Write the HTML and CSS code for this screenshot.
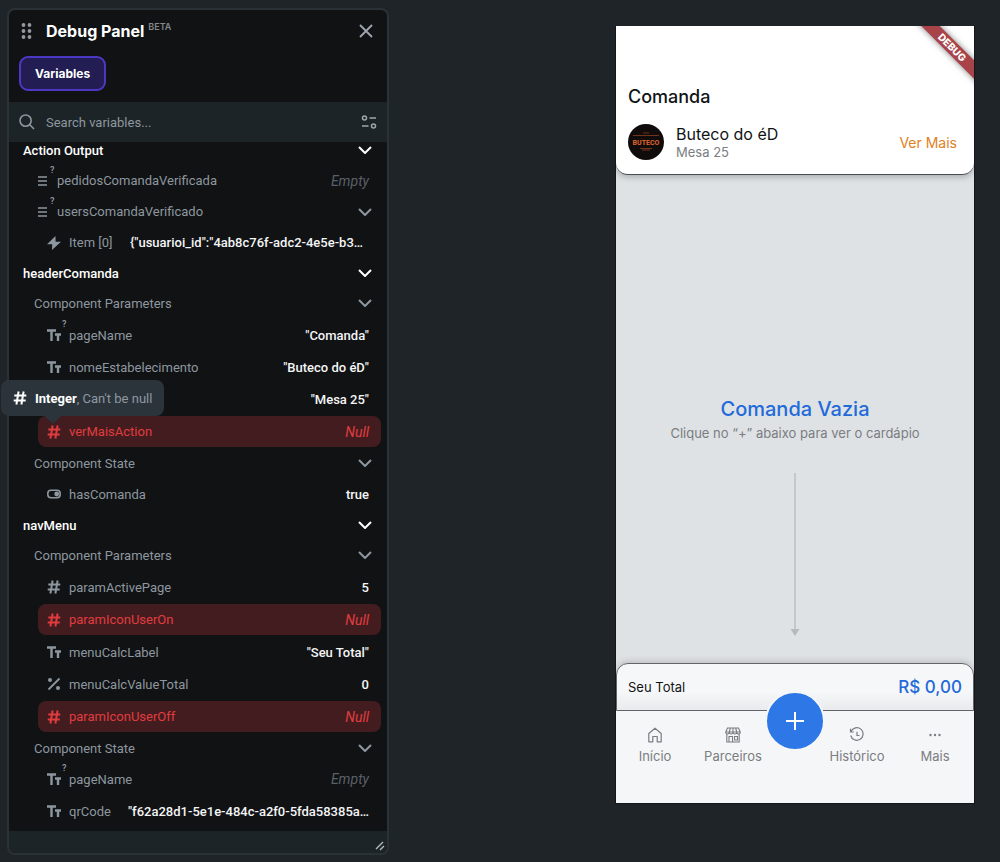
FILE: index.html
```
<!DOCTYPE html>
<html lang="pt-BR">

<head>
  <meta charset="UTF-8">
  <meta name="viewport" content="width=device-width, initial-scale=1.0">
  <title>Debug Panel | Comanda</title>
  <link rel="stylesheet" href="styles.css">
</head>

<body>
  <!-- shared icons -->
  <svg class="sprite" aria-hidden="true">
    <symbol id="chevron" viewBox="0 0 14 8">
      <path d="M1 1l6 6 6-6" fill="none" stroke="currentColor" stroke-width="2" />
    </symbol>
    <symbol id="text" viewBox="0 0 14 12">
      <path d="M0 1.5h9M4.5 1v11M8 5.5h6M11 5v7" fill="none" stroke="currentColor" stroke-width="2.4" />
    </symbol>
    <symbol id="hash" viewBox="0 0 14 14">
      <path d="M5.6 0.5L3.4 13.5M10.6 0.5L8.4 13.5M1.3 4.5h12M0.7 9.5h12" fill="none" stroke="currentColor" stroke-width="2" />
    </symbol>
    <symbol id="list" viewBox="0 0 10 10">
      <path d="M0 1h9M0 5h9M0 9h9" fill="none" stroke="currentColor" stroke-width="1.4" />
    </symbol>
    <symbol id="bolt" viewBox="0 0 14 14">
      <path d="M8.5 0L0 8.2h5.2L5 14l9-8.2H8.6z" fill="currentColor" />
    </symbol>
    <symbol id="toggle" viewBox="0 0 14 9">
      <rect x="0.8" y="0.8" width="12.4" height="7.4" rx="3.2" fill="none" stroke="currentColor" stroke-width="1.6" />
      <circle cx="9.7" cy="4.5" r="2.4" fill="currentColor" />
    </symbol>
    <symbol id="percent" viewBox="0 0 14 14">
      <path d="M1.5 12.5l11-11" stroke="currentColor" stroke-width="1.8" />
      <circle cx="3" cy="3" r="2" fill="currentColor" />
      <circle cx="11" cy="11" r="2" fill="currentColor" />
    </symbol>
  </svg>

  <aside class="panel">
    <header class="panel-header">
      <div class="panel-title">
        <svg class="grip" viewBox="0 0 12 16">
          <g fill="currentColor">
            <circle cx="2.5" cy="2" r="1.9" /><circle cx="8.5" cy="2" r="1.9" />
            <circle cx="2.5" cy="8" r="1.9" /><circle cx="8.5" cy="8" r="1.9" />
            <circle cx="2.5" cy="14" r="1.9" /><circle cx="8.5" cy="14" r="1.9" />
          </g>
        </svg>
        <h1>Debug Panel</h1>
        <span class="beta">BETA</span>
        <button class="icon-button close" type="button" aria-label="Close">
          <svg viewBox="0 0 14 14"><path d="M1 1l12 12M13 1L1 13" stroke="currentColor" stroke-width="1.9" /></svg>
        </button>
      </div>
      <button class="tab" type="button">Variables</button>
    </header>

    <div class="search">
      <label for="search" aria-label="Search variables">
        <svg viewBox="0 0 16 16"><g fill="none" stroke="currentColor" stroke-width="1.6"><circle cx="6.6" cy="6.6" r="5.6" /><path d="M10.8 10.8L15 15" /></g></svg>
      </label>
      <input id="search" type="text" placeholder="Search variables...">
      <button class="icon-button filter" type="button" aria-label="Filter">
        <svg viewBox="0 0 16 14"><g fill="none" stroke="currentColor" stroke-width="1.5"><circle cx="3.5" cy="3" r="2" /><path d="M8.5 3H15M1 11h6.5" /><circle cx="12.5" cy="11" r="2" /></g></svg>
      </button>
    </div>

    <div class="tree">
      <section class="group group-actions">
        <h2>Action Output <svg class="chevron"><use href="#chevron" /></svg></h2>
        <ul>
          <li class="var list-var"><svg><use href="#list" /></svg><sup>?</sup><span class="name">pedidosComandaVerificada</span><span class="value empty">Empty</span></li>
          <li class="var list-var expandable"><svg><use href="#list" /></svg><sup>?</sup><span class="name">usersComandaVerificado</span><svg class="chevron"><use href="#chevron" /></svg></li>
          <li class="var item-var"><svg><use href="#bolt" /></svg><span class="name">Item [0]</span><span class="value">{"usuarioi_id":"4ab8c76f-adc2-4e5e-b3…</span></li>
        </ul>
      </section>

      <section class="group">
        <h2>headerComanda <svg class="chevron"><use href="#chevron" /></svg></h2>
        <h3>Component Parameters <svg class="chevron"><use href="#chevron" /></svg></h3>
        <ul>
          <li class="var"><svg><use href="#text" /></svg><sup>?</sup><span class="name">pageName</span><span class="value">"Comanda"</span></li>
          <li class="var"><svg><use href="#text" /></svg><span class="name">nomeEstabelecimento</span><span class="value">"Buteco do éD"</span></li>
          <li class="var"><svg><use href="#text" /></svg><span class="name"></span><span class="value">"Mesa 25"</span></li>
          <li class="var is-null"><svg><use href="#hash" /></svg><span class="name">verMaisAction</span><span class="value">Null</span></li>
        </ul>
        <h3>Component State <svg class="chevron"><use href="#chevron" /></svg></h3>
        <ul>
          <li class="var"><svg><use href="#toggle" /></svg><span class="name">hasComanda</span><span class="value">true</span></li>
        </ul>
      </section>

      <section class="group">
        <h2>navMenu <svg class="chevron"><use href="#chevron" /></svg></h2>
        <h3>Component Parameters <svg class="chevron"><use href="#chevron" /></svg></h3>
        <ul>
          <li class="var"><svg><use href="#hash" /></svg><span class="name">paramActivePage</span><span class="value">5</span></li>
          <li class="var is-null"><svg><use href="#hash" /></svg><span class="name">paramIconUserOn</span><span class="value">Null</span></li>
          <li class="var"><svg><use href="#text" /></svg><span class="name">menuCalcLabel</span><span class="value">"Seu Total"</span></li>
          <li class="var"><svg><use href="#percent" /></svg><span class="name">menuCalcValueTotal</span><span class="value">0</span></li>
          <li class="var is-null"><svg><use href="#hash" /></svg><span class="name">paramIconUserOff</span><span class="value">Null</span></li>
        </ul>
        <h3>Component State <svg class="chevron"><use href="#chevron" /></svg></h3>
        <ul>
          <li class="var"><svg><use href="#text" /></svg><sup>?</sup><span class="name">pageName</span><span class="value empty">Empty</span></li>
          <li class="var"><svg><use href="#text" /></svg><span class="name">qrCode</span><span class="value">"f62a28d1-5e1e-484c-a2f0-5fda58385a…</span></li>
        </ul>
      </section>
    </div>

    <footer class="panel-footer">
      <svg viewBox="0 0 10 10"><path d="M1 8L8 1M5 9l4-4" stroke="currentColor" stroke-width="1.4" /></svg>
    </footer>

    <div class="tooltip" role="tooltip">
      <svg><use href="#hash" /></svg>
      <p><strong>Integer</strong>, Can't be null</p>
    </div>
  </aside>

  <main class="stage">
    <div class="phone">
      <div class="ribbon">DEBUG</div>
      <header class="app-header">
        <h2>Comanda</h2>
        <div class="place">
          <svg class="logo" viewBox="0 0 36 36">
            <circle cx="18" cy="18" r="18" fill="#100c0b" />
            <path d="M15 9h6M5 11.5h26M12 24.5h12M14 26h8" stroke="#8a3d1d" stroke-width="0.8" />
            <text x="18" y="21" text-anchor="middle">BUTECO</text>
          </svg>
          <div class="place-info">
            <p class="place-name">Buteco do éD</p>
            <p class="place-table">Mesa 25</p>
          </div>
          <a class="more" href="#">Ver Mais</a>
        </div>
      </header>

      <div class="empty-state">
        <h3>Comanda Vazia</h3>
        <p>Clique no “+” abaixo para ver o cardápio</p>
        <svg class="arrow" viewBox="0 0 10 164"><path d="M5 0v158" stroke="#bdc0c4" stroke-width="1.6" /><path d="M0.5 156h9L5 163z" fill="#b6babf" /></svg>
      </div>

      <div class="total">
        <span>Seu Total</span>
        <strong>R$ 0,00</strong>
      </div>
      <nav class="nav">
        <a href="#">
          <svg viewBox="0 0 16 16"><path d="M1.8 6.5L8 1.2l6.2 5.3v8.3h-4V9.5H5.8v5.3h-4z" fill="none" stroke="currentColor" stroke-width="1.2" stroke-linejoin="round" /></svg>
          Início
        </a>
        <a href="#">
          <svg viewBox="0 0 16 16"><g fill="none" stroke="currentColor" stroke-width="1.1"><path d="M2.5 1h11l1.8 4.2c0 2.4-3.6 2.4-3.6 0 0 2.4-3.7 2.4-3.7 0 0 2.4-3.7 2.4-3.7 0 0 2.4-3.6 2.4-3.6 0zM0.7 5h14.6M5.3 1l-1 4M8 1v4M10.7 1l1 4M1.8 7v8h12.4V7M4 15V9.5h3.5V15M9.5 9.5h3V13h-3z" /></g></svg>
          Parceiros
        </a>
        <button class="add" type="button" aria-label="Adicionar">
          <svg viewBox="0 0 20 20"><path d="M10 1v18M1 10h18" stroke="#fff" stroke-width="2" /></svg>
        </button>
        <a href="#">
          <svg viewBox="0 0 16 16"><path d="M2 4.5A6.3 6.3 0 1 1 1.7 8.5M1.5 1.8v3.2h3.3M8 4.8V8.5h2.5" fill="none" stroke="currentColor" stroke-width="1.2" /></svg>
          Histórico
        </a>
        <a href="#">
          <svg viewBox="0 0 16 16"><g fill="currentColor"><circle cx="3.5" cy="8" r="1.2" /><circle cx="8" cy="8" r="1.2" /><circle cx="12.5" cy="8" r="1.2" /></g></svg>
          Mais
        </a>
      </nav>
    </div>
  </main>
</body>

</html>
```
FILE: styles.css
```
:root {
  --background: #1f2428;
  --panel: #111214;
  --bar: #1d2428;
  --border: #2b3237;
  --muted: #8d979f;
  --danger: #e03c3f;
  --blue: #226ada;
  --gray: #7a7d81;
}

* {
  margin: 0;
  padding: 0;
  box-sizing: border-box;
}

body {
  display: flex;
  min-height: 100vh;
  background: var(--background);
  color: #fff;
  font-family: 'Inter', sans-serif;
  font-size: 13px;
}

button,
input {
  font: inherit;
  border: none;
  background: none;
}

ul {
  list-style: none;
}

a {
  text-decoration: none;
}

.sprite {
  position: absolute;
  width: 0;
  height: 0;
}

/* Debug panel */
.panel {
  position: relative;
  display: flex;
  flex-direction: column;
  flex: none;
  width: 382px;
  margin: 8px 0 7px 7px;
  border: 2px solid var(--border);
  border-radius: 8px;
  background: var(--panel);
  font-family: 'Roboto', sans-serif;
}

.panel-header {
  padding: 9px 14px 11px 10px;
  font-family: 'Inter', sans-serif;
}

.panel-title {
  display: flex;
  align-items: center;
  height: 24px;
  margin-bottom: 13px;
}

.panel-title h1 {
  font-size: 16px;
  font-weight: 700;
}

.grip {
  width: 12px;
  height: 16px;
  margin: 0 13px 0 2px;
  color: #93999e;
}

.beta {
  align-self: flex-start;
  margin: 2px 0 0 4px;
  color: #82878b;
  font-size: 9px;
  font-weight: 600;
}

.icon-button {
  display: flex;
  color: #9da6ad;
  cursor: pointer;
}

.close {
  margin-left: auto;
}

.close svg {
  width: 14px;
  height: 14px;
}

.tab {
  height: 35px;
  padding: 0 14px;
  border: 2px solid #4b39c4;
  border-radius: 9px;
  background: #221d52;
  color: #fff;
  font-size: 12px;
  font-weight: 700;
}

.search {
  display: flex;
  align-items: center;
  height: 40px;
  padding: 0 10px;
  background: var(--bar);
  color: var(--muted);
}

.search label,
.search label svg {
  width: 16px;
  height: 16px;
}

.search input {
  flex: 1;
  min-width: 0;
  margin-left: 11px;
  color: #fff;
}

.search input::placeholder {
  color: var(--muted);
}

.filter svg {
  width: 16px;
  height: 14px;
}

.tree {
  flex: 1;
  overflow: hidden;
}

.group h2,
.group h3 {
  display: flex;
  align-items: center;
  justify-content: space-between;
  height: 30px;
  padding: 0 15px 0 14px;
  font-size: 13px;
}

.group h2 {
  font-weight: 500;
}

.group h3 {
  padding-left: 25px;
  color: var(--muted);
  font-weight: 400;
}

.group h2 + h3 + ul {
  margin-top: 1px;
}

/* the list is scrolled a little under the search bar */
.group-actions {
  margin-top: -7px;
}

.chevron {
  flex: none;
  width: 14px;
  height: 8px;
}

.var {
  position: relative;
  display: flex;
  align-items: center;
  height: 32px;
  margin: 0 6px 0 29px;
  padding: 0 12px 0 9px;
  color: var(--muted);
}

.var > svg:first-child {
  flex: none;
  width: 14px;
  height: 14px;
  margin-right: 8px;
}

.var sup {
  position: absolute;
  top: 0;
  left: 24px;
  font-size: 9px;
  font-weight: 600;
  line-height: 11px;
}

.var .name {
  white-space: nowrap;
}

.var .value {
  margin-left: auto;
  color: #f4f5f6;
  font-weight: 500;
  white-space: nowrap;
}

.var .empty,
.is-null .value {
  color: #596067;
  font-size: 14px;
  font-style: italic;
  font-weight: 400;
}

.group-actions .var {
  height: 31px;
}

.list-var {
  margin-left: 20px;
  padding-left: 8px;
}

.list-var > svg:first-child {
  width: 12px;
  height: 10px;
  margin-right: 8px;
}

.list-var sup {
  left: 21px;
}

.expandable {
  margin-right: 15px;
  padding-right: 0;
}

.expandable .chevron {
  margin-left: auto;
}

.item-var {
  padding-right: 18px;
}

.is-null {
  height: 31px;
  margin-top: 1px;
  margin-bottom: 1px;
  border-radius: 8px;
  background: #431c1f;
  color: var(--danger);
}

.is-null .value {
  color: var(--danger);
}

.panel-footer {
  display: flex;
  align-items: flex-end;
  justify-content: flex-end;
  height: 22px;
  padding: 0 2px 2px;
  border-radius: 0 0 6px 6px;
  background: var(--bar);
  color: #b3babf;
}

.panel-footer svg {
  width: 10px;
  height: 10px;
}

.tooltip {
  position: absolute;
  top: 370px;
  left: -8px;
  display: flex;
  align-items: center;
  gap: 8px;
  height: 36px;
  padding: 0 12px;
  border-radius: 8px;
  background: #2b343b;
  color: #8f99a2;
  white-space: nowrap;
}

.tooltip::after {
  content: '';
  position: absolute;
  top: 100%;
  left: 44px;
  border: 8px solid transparent;
  border-top-color: #2b343b;
  border-bottom: none;
}

.tooltip svg {
  width: 14px;
  height: 14px;
  color: #fff;
}

.tooltip strong {
  color: #fff;
}

/* App preview */
.stage {
  display: flex;
  flex: 1;
  justify-content: flex-end;
  padding: 26px 25px 58px;
}

.phone {
  position: relative;
  display: flex;
  flex-direction: column;
  width: 360px;
  overflow: hidden;
  border: 1px solid #14171a;
  border-top: none;
  background: #dfe2e5;
  color: #111315;
}

.ribbon {
  position: absolute;
  top: 15px;
  right: -28px;
  width: 100px;
  background: #a9434a;
  box-shadow: 0 0 6px rgba(0, 0, 0, 0.5);
  color: #fff;
  font-size: 10px;
  font-weight: 800;
  line-height: 13px;
  text-align: center;
  transform: rotate(45deg);
}

.app-header {
  padding: 60px 17px 14px 12px;
  border-bottom: 1px solid #4a4d50;
  border-radius: 0 0 12px 12px;
  background: #fff;
  box-shadow: 0 2px 6px rgba(0, 0, 0, 0.25);
}

.app-header h2 {
  margin-bottom: 16px;
  font-size: 18px;
  font-weight: 500;
  line-height: 22px;
}

.place {
  display: flex;
  align-items: center;
}

.logo {
  width: 36px;
  height: 36px;
}

.logo text {
  fill: #e0662c;
  font-family: 'Roboto', sans-serif;
  font-size: 7px;
  font-weight: 700;
}

.place-info {
  margin-left: 12px;
}

.place-name {
  font-size: 16px;
  line-height: 20px;
}

.place-table {
  color: var(--gray);
  line-height: 16px;
}

.more {
  margin-left: auto;
  color: #e08123;
  font-size: 14px;
}

.empty-state {
  display: flex;
  flex: 1;
  flex-direction: column;
  align-items: center;
  justify-content: flex-end;
  padding-bottom: 26px;
}

.empty-state h3 {
  color: var(--blue);
  font-size: 20px;
  font-weight: 500;
  line-height: 26px;
}

.empty-state p {
  color: var(--gray);
  line-height: 22px;
}

.arrow {
  width: 10px;
  height: 164px;
  margin-top: 29px;
}

.total {
  display: flex;
  align-items: center;
  justify-content: space-between;
  height: 48px;
  padding: 0 11px;
  border: 1px solid #626568;
  border-radius: 12px 12px 0 0;
  background: linear-gradient(#f6f7f9 60%, #e8eaec);
  box-shadow: 0 -2px 6px rgba(0, 0, 0, 0.15);
}

.total strong {
  color: var(--blue);
  font-size: 17px;
  font-weight: 500;
}

.nav {
  position: relative;
  display: grid;
  grid-template-columns: 1fr 1fr 46px 1fr 1fr;
  height: 92px;
  padding-top: 16px;
  background: #f5f6f8;
}

.nav a {
  display: flex;
  flex-direction: column;
  align-items: center;
  gap: 5px;
  color: var(--gray);
  line-height: 16px;
}

.nav a svg {
  width: 16px;
  height: 16px;
}

.add {
  position: absolute;
  top: -20px;
  left: 50%;
  display: flex;
  align-items: center;
  justify-content: center;
  width: 60px;
  height: 60px;
  border: 2px solid #f5f6f8;
  border-radius: 50%;
  background: #2d77e6;
  transform: translateX(-50%);
}

.add svg {
  width: 20px;
  height: 20px;
}

.nav a:nth-of-type(3) {
  grid-column: 4;
}
```
